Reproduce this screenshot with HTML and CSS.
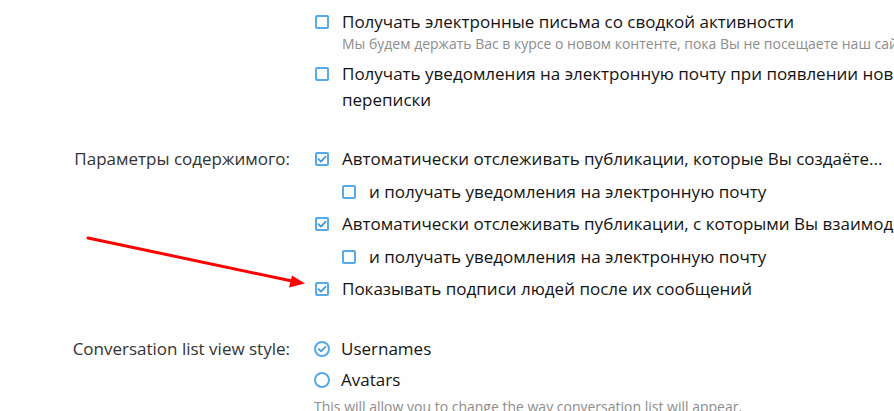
FILE: index.html
```html
<!DOCTYPE html>
<html>
<head>
<meta charset="utf-8">
<link rel="stylesheet" href="styles.css">
</head>
<body>
<div class="page">
  <div class="row">
    <div class="label"></div>
    <div class="controls">
      <div class="opt">
        <span class="cb"></span>
        <div class="otext">
          <div>Получать электронные письма со сводкой активности</div>
          <div class="hint">Мы будем держать Вас в курсе о новом контенте, пока Вы не посещаете наш сайт.</div>
        </div>
      </div>
      <div class="opt second">
        <span class="cb"></span>
        <div class="otext">Получать уведомления на электронную почту при появлении новых сообщений<br>переписки</div>
      </div>
    </div>
  </div>

  <div class="row sec2">
    <div class="label">Параметры содержимого:</div>
    <div class="controls">
      <div class="opt"><span class="cb on"><svg viewBox="0 0 14 14"><path d="M3.5 7.2 L6 9.6 L10.6 4.6"/></svg></span><div class="otext">Автоматически отслеживать публикации, которые Вы создаёте...</div></div>
      <div class="opt sub"><span class="cb"></span><div class="otext">и получать уведомления на электронную почту</div></div>
      <div class="opt"><span class="cb on"><svg viewBox="0 0 14 14"><path d="M3.5 7.2 L6 9.6 L10.6 4.6"/></svg></span><div class="otext">Автоматически отслеживать публикации, с которыми Вы взаимодействуете</div></div>
      <div class="opt sub"><span class="cb"></span><div class="otext">и получать уведомления на электронную почту</div></div>
      <div class="opt"><span class="cb on"><svg viewBox="0 0 14 14"><path d="M3.5 7.2 L6 9.6 L10.6 4.6"/></svg></span><div class="otext">Показывать подписи людей после их сообщений</div></div>
    </div>
  </div>

  <div class="row sec3">
    <div class="label">Conversation list view style:</div>
    <div class="controls">
      <div class="opt radio"><span class="rb on"><svg viewBox="0 0 16 16"><path d="M4.8 8.2 L7.1 10.4 L11.3 6"/></svg></span><div class="otext">Usernames</div></div>
      <div class="opt radio"><span class="rb"></span><div class="otext">Avatars</div></div>
      <div class="hint bottom">This will allow you to change the way conversation list will appear.</div>
    </div>
  </div>
</div>
<svg class="arrow" width="894" height="411" viewBox="0 0 894 411">
  <line x1="88" y1="238" x2="292" y2="281" stroke="#fe0000" stroke-width="3" stroke-linecap="round"/>
  <polygon points="305,283.5 289,287.5 292,275.5" fill="#fe0000"/>
</svg>
</body>
</html>
```
FILE: styles.css
```css
html, body {
  margin: 0;
  padding: 0;
  background: #fefefe;
  overflow: hidden;
}
body {
  width: 894px;
  height: 411px;
  font-family: "Open Sans", "Noto Sans", sans-serif;
  font-size: 17px;
  color: #141414;
  position: relative;
}
.page {
  padding-top: 9px;
}
.row {
  display: flex;
  align-items: flex-start;
}
.label {
  width: 290px;
  flex: none;
  text-align: right;
  color: #333333;
  line-height: 26px;
  white-space: nowrap;
}
.controls {
  margin-left: 24px;
  flex: 1;
  min-width: 0;
  white-space: nowrap;
  overflow: hidden;
}
.opt {
  display: flex;
  align-items: flex-start;
  margin-bottom: 6.4px;
  line-height: 26px;
}
.opt.second {
  margin-top: 8px;
}
.otext {
  margin-left: 13px;
}
.hint {
  font-size: 14px;
  color: #8d8d8d;
  line-height: 18px;
}
.cb {
  flex: none;
  box-sizing: border-box;
  width: 14px;
  height: 14px;
  margin-top: 6px;
  margin-left: 1px;
  border: 2px solid #55aaee;
  border-radius: 2px;
  display: flex;
}
.cb svg {
  width: 14px;
  height: 14px;
  margin: -2px;
}
.cb svg path, .rb svg path {
  fill: none;
  stroke: #3f97e0;
  stroke-width: 1.8;
  stroke-linecap: round;
  stroke-linejoin: round;
}
.sub {
  margin-left: 27px;
}
.sec2 {
  margin-top: 27px;
}
.sec3 {
  margin-top: 28px;
}
.radio {
  margin-bottom: 5px;
}
.radio .otext {
  margin-left: 11px;
}
.rb {
  flex: none;
  box-sizing: border-box;
  width: 16px;
  height: 16px;
  margin-top: 5px;
  border: 2px solid #55aaee;
  border-radius: 50%;
  display: flex;
}
.rb svg {
  width: 16px;
  height: 16px;
  margin: -2px;
}
.bottom {
  margin-top: 4px;
}
.arrow {
  position: absolute;
  left: 0;
  top: 0;
  pointer-events: none;
}
```
